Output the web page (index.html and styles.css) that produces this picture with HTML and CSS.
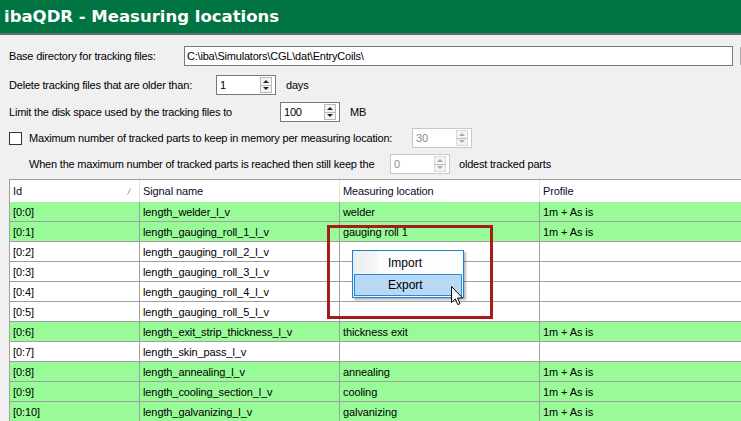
FILE: index.html
```html
<!DOCTYPE html>
<html lang="en">

<head>
  <meta charset="UTF-8" />
  <meta name="viewport" content="width=device-width, initial-scale=1.0" />
  <title>ibaQDR - Measuring locations</title>
  <link rel="stylesheet" href="styles.css">
</head>

<body>
  <div class="titlebar">
    <h1 class="title">ibaQDR - Measuring locations</h1>
  </div>

  <div class="form">
    <div class="row r1">
      <span class="lbl w-base">Base directory for tracking files:</span>
      <div class="textbox">C:\iba\Simulators\CGL\dat\EntryCoils\</div>
      <div class="browse"></div>
    </div>
    <div class="row r2">
      <span class="lbl w-days">Delete tracking files that are older than:</span>
      <div class="spin">
        <span class="spin-val">1</span>
        <span class="spin-btns"><i class="up"></i><i class="down"></i></span>
      </div>
      <span class="unit">days</span>
    </div>
    <div class="row r3">
      <span class="lbl w-disk">Limit the disk space used by the tracking files to</span>
      <div class="spin">
        <span class="spin-val">100</span>
        <span class="spin-btns"><i class="up"></i><i class="down"></i></span>
      </div>
      <span class="unit">MB</span>
    </div>
    <div class="row r4">
      <span class="check"></span>
      <span class="lbl w-max">Maximum number of tracked parts to keep in memory per measuring location:</span>
      <div class="spin disabled">
        <span class="spin-val">30</span>
        <span class="spin-btns"><i class="up"></i><i class="down"></i></span>
      </div>
    </div>
    <div class="row r5">
      <span class="lbl w-keep">When the maximum number of tracked parts is reached then still keep the</span>
      <div class="spin disabled">
        <span class="spin-val">0</span>
        <span class="spin-btns"><i class="up"></i><i class="down"></i></span>
      </div>
      <span class="unit u-keep">oldest tracked parts</span>
    </div>
  </div>

  <div class="grid">
    <div class="grow head">
      <div class="cell">Id
        <svg class="sort" width="4" height="7" viewBox="0 0 4 7">
          <path d="M3.5 0.5 L0.5 6.5" stroke="#9a9a9a" stroke-width="1" fill="none" />
        </svg>
      </div>
      <div class="cell">Signal name</div>
      <div class="cell">Measuring location</div>
      <div class="cell">Profile</div>
    </div>
    <div class="grow on">
      <div class="cell">[0:0]</div>
      <div class="cell">length_welder_l_v</div>
      <div class="cell">welder</div>
      <div class="cell">1m + As is</div>
    </div>
    <div class="grow on">
      <div class="cell">[0:1]</div>
      <div class="cell">length_gauging_roll_1_l_v</div>
      <div class="cell">gauging roll 1</div>
      <div class="cell">1m + As is</div>
    </div>
    <div class="grow">
      <div class="cell">[0:2]</div>
      <div class="cell">length_gauging_roll_2_l_v</div>
      <div class="cell"></div>
      <div class="cell"></div>
    </div>
    <div class="grow">
      <div class="cell">[0:3]</div>
      <div class="cell">length_gauging_roll_3_l_v</div>
      <div class="cell"></div>
      <div class="cell"></div>
    </div>
    <div class="grow">
      <div class="cell">[0:4]</div>
      <div class="cell">length_gauging_roll_4_l_v</div>
      <div class="cell"></div>
      <div class="cell"></div>
    </div>
    <div class="grow">
      <div class="cell">[0:5]</div>
      <div class="cell">length_gauging_roll_5_l_v</div>
      <div class="cell"></div>
      <div class="cell"></div>
    </div>
    <div class="grow on">
      <div class="cell">[0:6]</div>
      <div class="cell">length_exit_strip_thickness_l_v</div>
      <div class="cell">thickness exit</div>
      <div class="cell">1m + As is</div>
    </div>
    <div class="grow">
      <div class="cell">[0:7]</div>
      <div class="cell">length_skin_pass_l_v</div>
      <div class="cell"></div>
      <div class="cell"></div>
    </div>
    <div class="grow on">
      <div class="cell">[0:8]</div>
      <div class="cell">length_annealing_l_v</div>
      <div class="cell">annealing</div>
      <div class="cell">1m + As is</div>
    </div>
    <div class="grow on">
      <div class="cell">[0:9]</div>
      <div class="cell">length_cooling_section_l_v</div>
      <div class="cell">cooling</div>
      <div class="cell">1m + As is</div>
    </div>
    <div class="grow on">
      <div class="cell">[0:10]</div>
      <div class="cell">length_galvanizing_l_v</div>
      <div class="cell">galvanizing</div>
      <div class="cell">1m + As is</div>
    </div>
  </div>

  <!-- annotation box and context menu over the grid -->
  <div class="mark"></div>
  <div class="menu">
    <div class="item">Import</div>
    <div class="item active">Export</div>
  </div>
  <svg class="cursor" width="13" height="20" viewBox="0 0 13 20">
    <path d="M0.5 0.5 L0.5 16.5 L4.3 12.9 L6.8 18.6 L9 17.6 L6.6 12 L11.6 12 Z" fill="#fff" stroke="#000" stroke-width="1" stroke-linejoin="miter" />
  </svg>
</body>

</html>
```

FILE: styles.css
```css
* {
  margin: 0;
  padding: 0;
  box-sizing: border-box;
}

html,
body {
  height: 100%;
}

body {
  background-color: #f0f0f0;
  font-family: "Liberation Sans", Arial, sans-serif;
  font-size: 11px;
  letter-spacing: -0.2px;
  color: #000;
  overflow: hidden;
}

/* title */
.titlebar {
  height: 35px;
  background-color: #007442;
  border-bottom: 2px solid #62706a;
  padding-left: 4px;
}

.title {
  font-family: "DejaVu Sans", sans-serif;
  font-weight: bold;
  font-size: 16.5px;
  letter-spacing: 0;
  color: #fff;
  line-height: 33px;
}

/* settings */
.form {
  padding: 11px 0 0 9px;
}

.row {
  display: flex;
  align-items: center;
  height: 20px;
  white-space: nowrap;
}

.r2 {
  margin-top: 9px;
}

.r3 {
  margin-top: 7px;
}

.r4 {
  margin-top: 6px;
}

.r5 {
  margin-top: 6px;
  padding-left: 20px;
}

.lbl {
  flex: none;
}

.w-base {
  width: 175px;
}

.w-days {
  width: 207px;
}

.w-disk {
  width: 271px;
}

.w-max {
  width: 383px;
}

.w-keep {
  width: 361px;
}

.check {
  width: 13px;
  height: 13px;
  border: 1px solid #333;
  background-color: #fff;
  margin-right: 7px;
  flex: none;
}

.textbox {
  width: 549px;
  height: 20px;
  border: 1px solid #7a7a7a;
  background-color: #fff;
  padding-left: 2px;
  line-height: 18px;
  flex: none;
}

/* only the left edge of the browse button shows */
.browse {
  width: 1px;
  height: 18px;
  margin-left: 7px;
  background-color: #adadad;
  flex: none;
}

.spin {
  width: 60px;
  height: 20px;
  border: 1px solid #7a7a7a;
  background-color: #fff;
  display: flex;
  align-items: center;
  justify-content: space-between;
  padding: 0 3px 0 3px;
  flex: none;
}

.spin-btns {
  width: 12px;
  height: 16px;
  display: flex;
  flex-direction: column;
  border: 1px solid #b9b9b9;
  background-color: #f4f4f4;
}

.spin-btns i {
  flex: 1;
  display: flex;
  align-items: center;
  justify-content: center;
}

.spin-btns i + i {
  border-top: 1px solid #b9b9b9;
}

.spin-btns i::after {
  content: "";
  border-left: 3px solid transparent;
  border-right: 3px solid transparent;
}

.up::after {
  border-bottom: 3px solid #222;
}

.down::after {
  border-top: 3px solid #222;
}

.spin.disabled {
  border-color: #c8c8c8;
  color: #8a8a8a;
}

.spin.disabled .spin-btns {
  border-color: #d8d8d8;
}

.spin.disabled .up::after {
  border-bottom-color: #a8a8a8;
}

.spin.disabled .down::after {
  border-top-color: #a8a8a8;
}

.unit {
  margin-left: 10px;
}

.u-keep {
  margin-left: 9px;
}

/* data grid */
.grid {
  margin: 5px 0 0 9px;
  width: 732px;
  border-left: 1px solid #a0a0a0;
  border-top: 1px solid #a0a0a0;
  background-color: #fff;
  letter-spacing: -0.1px;
}

.grow {
  display: grid;
  grid-template-columns: 130px 200px 200px 1fr;
  height: 20px;
  border-bottom: 1px solid #a0a0a0;
}

.grow.head {
  height: 22px;
  border-bottom: none;
  color: #0a0a2a;
}

.grow.on {
  background-color: #98fb98;
}

.cell {
  border-right: 1px solid #a0a0a0;
  padding-left: 3px;
  display: flex;
  align-items: center;
  white-space: nowrap;
  overflow: hidden;
}

.cell:last-child {
  border-right: none;
}

.head .cell {
  border-right-color: #e3e3e3;
  position: relative;
}

.sort {
  position: absolute;
  left: 117px;
  top: 8px;
}

.mark {
  position: absolute;
  left: 327px;
  top: 225px;
  width: 166px;
  height: 94px;
  border: 3px solid #a61b1b;
}

.menu {
  position: absolute;
  left: 352px;
  top: 250px;
  width: 112px;
  height: 48px;
  border: 1px solid #1a7fd9;
  padding: 1px;
  background: linear-gradient(to right, #ececec 0, #f7f7f7 24px, #fdfdfd 25px, #fdfdfd 100%);
  box-shadow: 2px 2px 2px rgba(0, 0, 0, 0.28);
  font-size: 12px;
  letter-spacing: 0;
}

.item {
  height: 22px;
  line-height: 20px;
  padding-left: 33px;
  border: 1px solid transparent;
}

.item.active {
  background-color: #b9d8f4;
  border-color: #2f86dd;
}

.cursor {
  position: absolute;
  left: 451px;
  top: 286px;
}
```
